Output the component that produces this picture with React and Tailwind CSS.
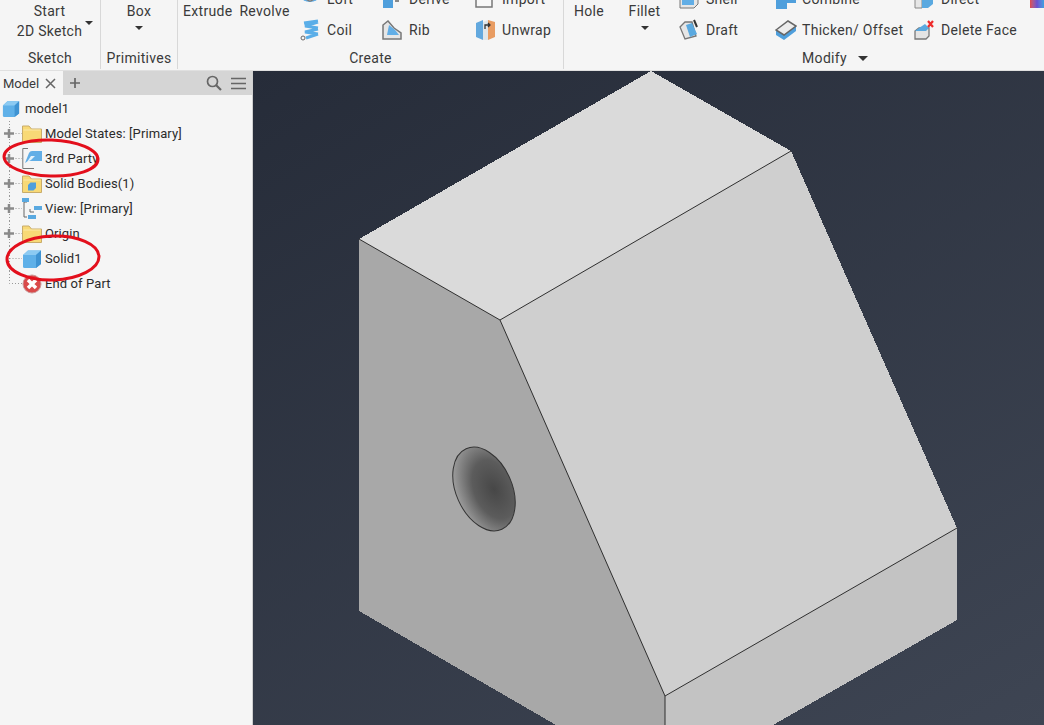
const Cube = ({ size = 20 }) => (
  <svg width={size} height={size} viewBox="0 0 20 20">
    <path d="M1 6 L6 1.5 H19 V15 L14 19 H2.5 Q1 19 1 17.5 Z" fill="#5fb0e8" />
    <path d="M1 6 L6 1.5 H19 L14 6 Z" fill="#8ccaf2" />
    <path d="M14 6 L19 1.5 V15 L14 19 Z" fill="#3f93d2" />
  </svg>
);

const Folder = ({ inner }) => (
  <svg width="20" height="20" viewBox="0 0 20 20">
    <path d="M.5 18.5 V2 H7 L9.5 5 H19.5 V18.5 Z" fill="#f8d976" stroke="#c9ac6a" />
    <path d="M1.5 6 H18.5" stroke="#fbe9a8" />
    {inner && <path d="M6 11 L8.5 8.5 H14 V14 L11.5 16.5 H6 Z" fill="#4f9fdc" />}
  </svg>
);

const ThirdParty = () => (
  <svg width="20" height="22" viewBox="0 0 20 22">
    <path d="M6 .5 H.8 V20.5 H12" fill="none" stroke="#777" />
    <path d="M3 15 L7 5 Q8 3 10 3 H20 V13 H9 L6 13 Z" fill="#62aee6" />
    <path d="M5 14 L9 8 H13 L9 12 Z" fill="#e4f2fb" />
  </svg>
);

const ViewIcon = () => (
  <svg width="20" height="22" viewBox="0 0 20 22">
    <path d="M5 4 H2 V19 H5" fill="none" stroke="#666" />
    <path d="M8 11 V14 H12" fill="none" stroke="#666" />
    <rect x="0" y="0" width="7" height="4" fill="#5aa9e0" />
    <rect x="12" y="8" width="8" height="4" fill="#5aa9e0" />
    <rect x="6" y="17" width="8" height="4" fill="#5aa9e0" />
  </svg>
);

const EndIcon = () => (
  <svg width="20" height="20" viewBox="0 0 20 20">
    <circle cx="10" cy="10" r="9" fill="#d94a4a" stroke="#c99" />
    <path d="M6 6 L14 14 M14 6 L6 14" stroke="#fff" strokeWidth="3.5" />
  </svg>
);

const Connector = ({ plus, last }) => (
  <svg width="22" height="25" viewBox="0 0 22 25" className="shrink-0">
    <path d={last ? "M9.5 0 V12.5 H22" : "M9.5 0 V25 M9.5 12.5 H22"} stroke="#999" strokeDasharray="1 2" fill="none" />
    {plus && <path d="M4 12.5 H14 M9 8 V17" stroke="#8a8a8a" strokeWidth="2.5" />}
  </svg>
);

const treeRows = [
  { label: "Model States: [Primary]", icon: <Folder />, plus: true },
  { label: "3rd Party", icon: <ThirdParty />, plus: true },
  { label: "Solid Bodies(1)", icon: <Folder inner />, plus: true },
  { label: "View: [Primary]", icon: <ViewIcon />, plus: true },
  { label: "Origin", icon: <Folder />, plus: true },
  { label: "Solid1", icon: <Cube /> },
  { label: "End of Part", icon: <EndIcon />, last: true },
];

const Caret = () => <div className="w-0 h-0 border-x-[4px] border-x-transparent border-t-[4px] border-t-[#333]" />;

// ribbon icons, the top row is scrolled half out of view
const LoftIcon = () => (
  <svg width="20" height="20" viewBox="0 0 20 20">
    <ellipse cx="10" cy="7" rx="9" ry="6" fill="#62aee6" />
    <circle cx="10" cy="8" r="4" fill="#f5f5f5" stroke="#777" strokeWidth="1.5" />
  </svg>
);
const CoilIcon = () => (
  <svg width="20" height="22" viewBox="0 0 20 22">
    <path d="M4 4 L18 2 M18 3 L5 7 L18 9 M18 10 L5 13 L18 15 M18 15 L6 19" fill="none" stroke="#5aaee8" strokeWidth="3" />
    <circle cx="3" cy="19" r="2" fill="#f5f5f5" stroke="#666" />
  </svg>
);
const RibIcon = () => (
  <svg width="20" height="20" viewBox="0 0 20 20">
    <path d="M1 19 V5 L6 1 L12 8 L19 13 V19 Z" fill="#e6e6e6" stroke="#777" strokeWidth="1.5" />
    <path d="M5 15 L7 5 Q13 9 17 15 Z" fill="#62aee6" />
  </svg>
);
const DeriveIcon = () => (
  <svg width="22" height="20" viewBox="0 0 22 20">
    <path d="M1 5 L5 1 H11 V19 H1 Z" fill="#4f9fdc" />
    <path d="M13 8 H20 M13 12 H17" stroke="#666" strokeWidth="1.5" />
  </svg>
);
const ImportIcon = () => (
  <svg width="20" height="20" viewBox="0 0 20 20">
    <rect x="1" y="0" width="16" height="18" fill="#f8f8f8" stroke="#777" strokeWidth="1.5" />
  </svg>
);
const UnwrapIcon = () => (
  <svg width="20" height="22" viewBox="0 0 20 22">
    <path d="M1 4 L8 1 V21 L1 18 Z" fill="#62a8de" />
    <path d="M8 3 L13 1 V21 L8 21 Z" fill="#dfe6ea" />
    <path d="M13 1 L20 3 V18 L13 21 Z" fill="#e89c62" />
    <path d="M10 10 V6 H15 M13 4 L15 6 L13 8" fill="none" stroke="#333" strokeWidth="1.3" />
  </svg>
);
const ShellIcon = () => (
  <svg width="20" height="20" viewBox="0 0 20 20">
    <path d="M1 8 L6 3 H19 V15 L15 19 H1 Z" fill="#e6e6e6" stroke="#777" />
    <path d="M3 7 H15 V16 H3 Z" fill="#62aee6" />
  </svg>
);
const DraftIcon = () => (
  <svg width="20" height="22" viewBox="0 0 20 22">
    <path d="M1 8 L6 3 L13 3 L17 17 L6 20 Z" fill="#e6e6e6" stroke="#777" strokeWidth="1.3" />
    <path d="M7 6 L13 4 L18 15 L11 18 Z" fill="#5aa9e0" />
    <path d="M15 1 L18 8" stroke="#333" strokeWidth="2" />
  </svg>
);
const CombineIcon = () => (
  <svg width="22" height="20" viewBox="0 0 22 20">
    <path d="M1 5 L4 1 H12 V9 H21 V14 H12 V20 H1 Z" fill="#4f9fdc" />
  </svg>
);
const ThickenIcon = () => (
  <svg width="22" height="20" viewBox="0 0 22 20">
    <path d="M1 10 L9 15 L21 6 V11 L9 20 L1 15 Z" fill="#4f9fdc" />
    <path d="M1 10 L13 1 L21 6 L9 15 Z" fill="#ececec" stroke="#666" strokeWidth="1.5" />
  </svg>
);
const DirectIcon = () => (
  <svg width="20" height="20" viewBox="0 0 20 20">
    <path d="M1 3 H8 V19 H1 Z" fill="#e6e6e6" stroke="#888" />
    <path d="M8 3 L12 1 H19 V15 L14 19 H8 Z" fill="#5aa9e0" />
  </svg>
);
const DeleteFaceIcon = () => (
  <svg width="20" height="20" viewBox="0 0 20 20">
    <path d="M1 11 L5 8 H15 V16 L12 19 H1 Z" fill="#e4e4e4" stroke="#777" strokeWidth="1.3" />
    <path d="M5 8 L11 4 L15 8 L12 11 H1 Z" fill="#5aa9e0" />
    <path d="M14 1 L19 7 M19 1 L14 7" stroke="#ee2b2b" strokeWidth="2.2" />
  </svg>
);

const SmallTool = ({ icon, label }) => (
  <div className="flex items-center h-[31px]">
    <div className="w-[27px] shrink-0 flex items-center">{icon}</div>
    <span>{label}</span>
  </div>
);

const SmallCol = ({ className, children }) => <div className={`flex flex-col -mt-[17px] ${className}`}>{children}</div>;

const Panel = ({ label, width, border = true, caret, children }) => (
  <div className={`flex flex-col shrink-0 h-[69px] ${border ? "border-r border-[#d8d8d8]" : ""}`} style={{ width }}>
    <div className="h-[48px] overflow-hidden flex">{children}</div>
    <div className={`flex-1 flex items-center justify-center gap-[11px] text-[14px] leading-[22px] ${caret ? "pl-[62px]" : ""}`}>
      {label}
      {caret && <div className="w-0 h-0 border-x-[5px] border-x-transparent border-t-[5px] border-t-[#333]" />}
    </div>
  </div>
);

function Model() {
  return (
    <svg viewBox="253 71 791 654" className="block w-full h-full">
      <defs>
        <radialGradient id="hole" cx="0.66" cy="0.55" r="0.7">
          <stop offset="0" stopColor="#474747" />
          <stop offset="0.5" stopColor="#5c5c5c" />
          <stop offset="1" stopColor="#a4a4a4" />
        </radialGradient>
      </defs>
      <g shapeRendering="crispEdges">
        <polygon points="651,71 791,151 500,320 359,239" fill="#dadada" />
        <polygon points="359,239 500,320 665,696 665,725 556,725 359,611" fill="#a8a8a8" />
        <polygon points="500,320 791,151 957,528 665,696" fill="#cfcfcf" />
        <polygon points="665,696 957,528 957,620 773,725 665,725" fill="#c3c3c3" />
      </g>
      <g stroke="#2f2f2f" strokeWidth="1" fill="none">
        <path d="M359 239 L500 320 L665 696 L957 528 M500 320 L791 151 M665 696 V725" />
      </g>
      <ellipse cx="484" cy="489" rx="28" ry="44" transform="rotate(-24 484 489)" fill="url(#hole)" stroke="#333" />
    </svg>
  );
}

export default function App() {
  return (
    <div className="w-[1044px] h-[725px] overflow-hidden flex flex-col bg-[#f5f5f5] text-[#3a3a3a] font-['Roboto',sans-serif]">
      {/* ribbon */}
      <div className="h-[71px] shrink-0 flex border-b border-[#e0e0e0] text-[14px] leading-[20px] tracking-[0.3px] relative">
        <Panel label="Sketch" width={101}>
          <div className="w-full flex justify-center pt-[1px] pl-[10px]">
            <div className="text-center">Start<br />2D Sketch</div>
            <div className="ml-[3px] mt-[20px]"><Caret /></div>
          </div>
        </Panel>
        <Panel label="Primitives" width={77}>
          <div className="w-full flex flex-col items-center pt-[1px]">
            Box
            <div className="mt-[5px]"><Caret /></div>
          </div>
        </Panel>
        <Panel label="Create" width={386}>
          <div className="pl-[5px] pt-[1px] flex gap-[7px] w-[122px] shrink-0">
            <span>Extrude</span><span>Revolve</span>
          </div>
          <SmallCol className="w-[82px] shrink-0">
            <SmallTool icon={<LoftIcon />} label="Loft" />
            <SmallTool icon={<CoilIcon />} label="Coil" />
          </SmallCol>
          <SmallCol className="w-[93px] shrink-0">
            <SmallTool icon={<DeriveIcon />} label="Derive" />
            <SmallTool icon={<RibIcon />} label="Rib" />
          </SmallCol>
          <SmallCol className="shrink-0">
            <SmallTool icon={<ImportIcon />} label="Import" />
            <SmallTool icon={<UnwrapIcon />} label="Unwrap" />
          </SmallCol>
        </Panel>
        <Panel label="Modify" width={480} border={false} caret>
          <div className="pl-[10px] pt-[1px] w-[55px] shrink-0">Hole</div>
          <div className="w-[51px] mr-[9px] shrink-0 flex flex-col items-center pt-[1px]">
            Fillet
            <div className="mt-[5px]"><Caret /></div>
          </div>
          <SmallCol className="w-[96px] shrink-0">
            <SmallTool icon={<ShellIcon />} label="Shell" />
            <SmallTool icon={<DraftIcon />} label="Draft" />
          </SmallCol>
          <SmallCol className="w-[139px] shrink-0">
            <SmallTool icon={<CombineIcon />} label="Combine" />
            <SmallTool icon={<ThickenIcon />} label="Thicken/ Offset" />
          </SmallCol>
          <SmallCol className="shrink-0">
            <SmallTool icon={<DirectIcon />} label="Direct" />
            <SmallTool icon={<DeleteFaceIcon />} label="Delete Face" />
          </SmallCol>
        </Panel>
        <div className="absolute right-0 top-0 w-[14px] h-[8px] bg-linear-to-r from-[#e0484a] via-[#6a4fd0] to-[#3aa0e0]" />
      </div>

      <div className="flex-1 flex min-h-0">
        {/* browser */}
        <div className="w-[253px] shrink-0 border-r border-[#cfcfcf] relative">
          <div className="h-[24px] bg-[#d5d5d5] flex items-center text-[13px]">
            <div className="w-[63px] h-full bg-[#f5f5f5] flex items-center pl-[3px] pt-[1px] gap-[6px]">
              Model
              <svg width="11" height="11" viewBox="0 0 11 11"><path d="M1 1 L10 10 M10 1 L1 10" stroke="#666" strokeWidth="1.5" /></svg>
            </div>
            <svg width="12" height="12" viewBox="0 0 12 12" className="ml-[6px]"><path d="M6 1 V11 M1 6 H11" stroke="#666" strokeWidth="1.7" /></svg>
            <div className="ml-auto flex items-center gap-[9px] pr-[6px]">
              <svg width="16" height="16" viewBox="0 0 16 16" fill="none" stroke="#666" strokeWidth="1.7"><circle cx="6.5" cy="6.5" r="5" /><path d="M10 10 L15 15" strokeWidth="2.2" /></svg>
              <svg width="15" height="13" viewBox="0 0 15 13" stroke="#666" strokeWidth="1.7"><path d="M0 1.5 H15 M0 6.5 H15 M0 11.5 H15" /></svg>
            </div>
          </div>
          <div className="pt-[1px] text-[13px] leading-[25px] tracking-[0.1px] text-[#2b2b2b]">
            <div className="h-[25px] flex items-center pl-[2px] gap-[5px]">
              <Cube size={18} />
              model1
            </div>
            {treeRows.map((row) => (
              <div key={row.label} className="h-[25px] flex items-center">
                <Connector plus={row.plus} last={row.last} />
                <div className="w-[23px] shrink-0 flex items-center">{row.icon}</div>
                {row.label}
              </div>
            ))}
          </div>
          <svg className="absolute left-0 top-0 pointer-events-none" width="120" height="230" viewBox="0 71 120 230" fill="none" stroke="#e30f1c" strokeWidth="3">
            <ellipse cx="51" cy="158" rx="47" ry="18" transform="rotate(2 51 158)" />
            <ellipse cx="53" cy="258" rx="46" ry="22" transform="rotate(-2 53 258)" />
          </svg>
        </div>
        {/* canvas */}
        <div className="flex-1 min-w-0 bg-linear-[150deg,#262c39,#3e4553]">
          <Model />
        </div>
      </div>
    </div>
  );
}
